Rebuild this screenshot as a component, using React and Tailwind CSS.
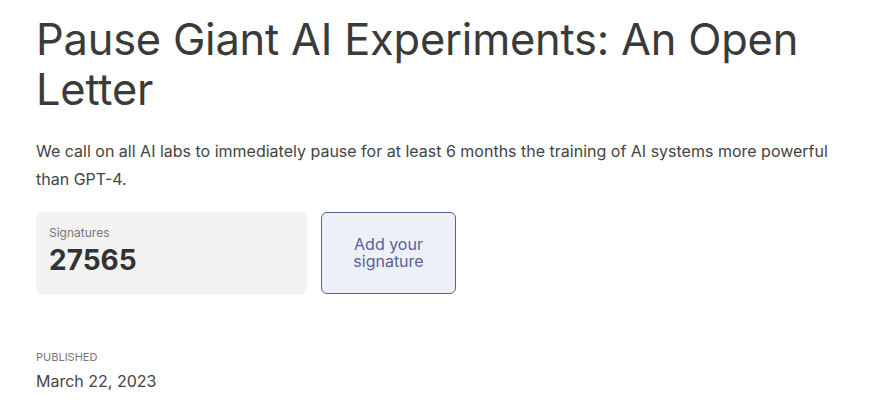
export default function App() {
  return (
    <div className="w-[892px] h-[405px] bg-white overflow-hidden" style={{ fontFamily: "Inter, 'Noto Sans', sans-serif" }}>
      <div className="pl-[36px] pt-[14px] pr-[60px]">
        <h1 className="text-[43.4px] leading-[50px] font-normal text-[#3a3a3a] tracking-[-0.2px]">
          Pause Giant AI Experiments: An Open Letter
        </h1>
        <p className="mt-[23px] text-[16px] leading-[28px] text-[#444] w-[800px]">
          We call on all AI labs to immediately pause for at least 6 months the training of AI systems more powerful than GPT-4.
        </p>
        <div className="mt-[19px] flex gap-[14px]">
          <div className="w-[271px] h-[82px] bg-[#f2f2f2] rounded-[6px] px-[13px] pt-[13px]">
            <div className="text-[12px] leading-[16px] text-[#777]">Signatures</div>
            <div className="mt-[2px] text-[28px] leading-[34px] font-bold text-[#333]">27565</div>
          </div>
          <button className="w-[135px] h-[82px] bg-[#eef0f7] border border-[#5b6092] rounded-[6px] text-[16px] text-[#5a6198] flex flex-col items-center justify-center">
            <span className="leading-[17px]">Add your</span>
            <span className="leading-[17px]">signature</span>
          </button>
        </div>
        <div className="mt-[56px] text-[11px] leading-[14px] uppercase text-[#777]">Published</div>
        <div className="mt-[7px] text-[16px] leading-[20px] text-[#444]">March 22, 2023</div>
      </div>
    </div>
  );
}
